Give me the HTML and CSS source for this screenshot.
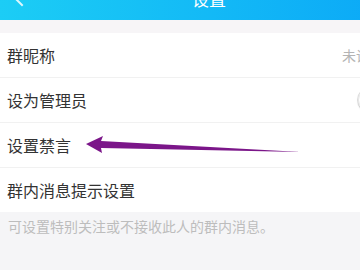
FILE: index.html
```html
<!DOCTYPE html>
<html lang="zh-CN">
<head>
    <meta charset="UTF-8">
    <meta name="viewport" content="width=device-width, initial-scale=1.0">
    <title>设置</title>
    <link rel="stylesheet" href="styles.css">
</head>
<body>
<div class="page">
    <div class="header">
        <span class="back"></span>
        <span class="title">设置</span>
    </div>
    <div class="gap"></div>
    <div class="list">
        <div class="row">
            <span class="label">群昵称</span>
            <span class="value">未设置</span>
        </div>
        <div class="row">
            <span class="label">设为管理员</span>
            <span class="switch"><span class="knob"></span></span>
        </div>
        <div class="row">
            <span class="label">设置禁言</span>
        </div>
        <div class="row">
            <span class="label">群内消息提示设置</span>
            <span class="value value-far">接收消息</span>
        </div>
    </div>
    <p class="note">可设置特别关注或不接收此人的群内消息。</p>

    <!-- annotation arrow drawn over the screenshot -->
    <svg class="arrow" width="216" height="18" viewBox="0 0 216 18">
        <polygon points="0,8 17,0 15,5 215,16 15,12 16,17" fill="#7b1689"/>
    </svg>
</div>
</body>
</html>
```

FILE: styles.css
```css
body {
    margin: 0;
    background: #f5f5f7;
    overflow: hidden;
    font-family: "Noto Sans CJK SC", "Noto Sans", sans-serif;
}
.page {
    position: relative;
    width: 418px;
    margin-top: -24px;
}
.header {
    height: 44px;
    background: linear-gradient(90deg, #1ccdf5, #0aa6f7);
    display: flex;
    align-items: center;
    position: relative;
}
.back {
    width: 10px;
    height: 10px;
    border-left: 2px solid #fff;
    border-bottom: 2px solid #fff;
    transform: rotate(45deg);
    margin-left: 16px;
    opacity: 0.85;
}
.title {
    position: absolute;
    left: 0;
    right: 0;
    text-align: center;
    color: #fff;
    font-size: 17px;
}
.gap {
    height: 13px;
    background: #f7f5f7;
}
.list {
    background: #fff;
}
.row {
    height: 44px;
    display: flex;
    align-items: center;
    justify-content: space-between;
    padding: 0 9px 0 7px;
    border-bottom: 1px solid #f1f1f1;
}
.row:last-child {
    border-bottom: none;
}
.label {
    font-size: 16px;
    color: #333;
}
.value {
    font-size: 14px;
    color: #b4b4b4;
    margin-right: 25px;
}
.value-far {
    margin-right: -10px;
}
.switch {
    width: 50px;
    height: 26px;
    border: 1px solid #e2e2e2;
    border-radius: 14px;
    background: #fff;
    display: flex;
    align-items: center;
}
.knob {
    width: 24px;
    height: 24px;
    border-radius: 50%;
    border: 1px solid #e6e6e6;
    box-shadow: 0 1px 2px rgba(0, 0, 0, 0.12);
    background: #fff;
}
.note {
    margin: 0;
    padding: 4px 8px;
    font-size: 14px;
    color: #bdbdbd;
}
.arrow {
    position: absolute;
    left: 86px;
    top: 160px;
}
```
